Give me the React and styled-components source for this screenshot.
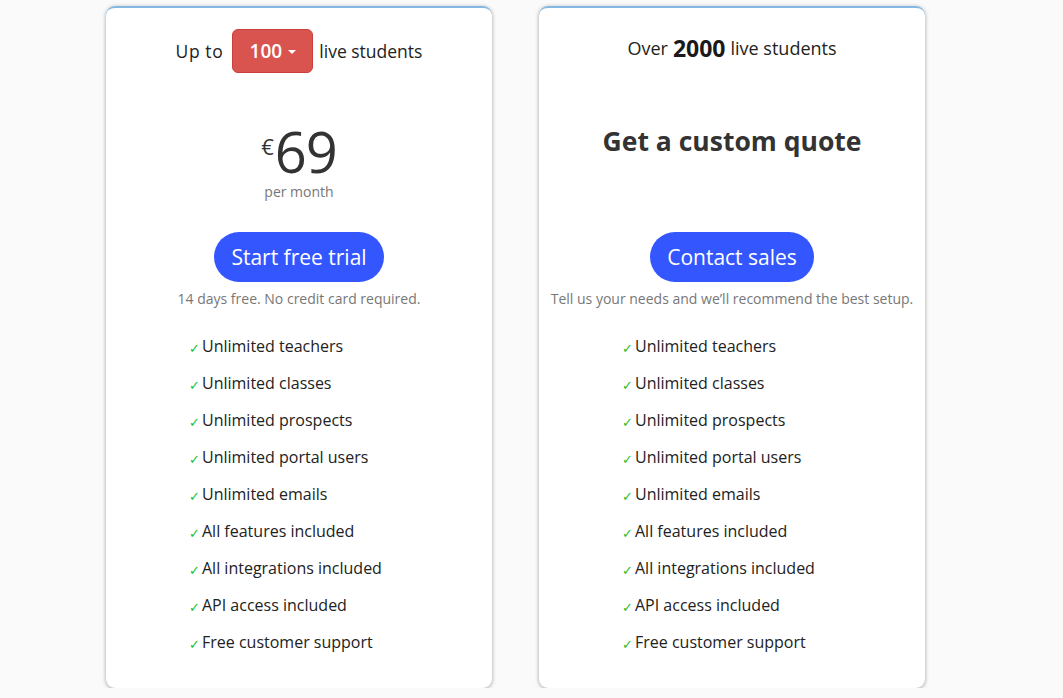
import styled, { createGlobalStyle } from 'styled-components'

const features = [
  'Unlimited teachers',
  'Unlimited classes',
  'Unlimited prospects',
  'Unlimited portal users',
  'Unlimited emails',
  'All features included',
  'All integrations included',
  'API access included',
  'Free customer support',
]

function FeatureList() {
  return (
    <Features>
      {features.map((f) => (
        <Feature key={f}>
          <Check>✓</Check>
          {f}
        </Feature>
      ))}
    </Features>
  )
}

function App() {
  return (
    <>
      <GlobalStyle />
      <Page>
        <Card>
          <Header>
            <Lead>Up to</Lead>
            <Dropdown>
              100 <Caret />
            </Dropdown>
            live students
          </Header>
          <Price>
            <Currency>€</Currency>69
          </Price>
          <Period>per month</Period>
          <CtaButton>Start free trial</CtaButton>
          <Note>14 days free. No credit card required.</Note>
          <FeatureList />
        </Card>

        <Card>
          <Header $tight>
            Over <Big>2000</Big> live students
          </Header>
          <Quote>Get a custom quote</Quote>
          <CtaButton>Contact sales</CtaButton>
          <Note>Tell us your needs and we’ll recommend the best setup.</Note>
          <FeatureList />
        </Card>
      </Page>
    </>
  )
}

const GlobalStyle = createGlobalStyle`
  html, body {
    margin: 0;
    padding: 0;
    background: #fafafa;
    font-family: "Open Sans", "Noto Sans", sans-serif;
    color: #333;
  }
`

const Page = styled.div`
  display: flex;
  gap: 47px;
  padding: 6px 0 0 106px;
`

const Card = styled.div`
  width: 386px;
  height: 682px;
  box-sizing: border-box;
  background: #fff;
  border-radius: 9px;
  border-top: 2px solid #84b8e2;
  box-shadow: 0 1px 4px rgba(0, 0, 0, 0.35);
  display: flex;
  flex-direction: column;
  align-items: center;
  padding-top: 21px;
`

const Header = styled.div`
  height: 44px;
  display: flex;
  align-items: center;
  gap: ${(p) => (p.$tight ? '5px' : '6px')};
  font-size: ${(p) => (p.$tight ? '18px' : '17.5px')};
  color: #222;
  margin-top: ${(p) => (p.$tight ? '-3px' : '0')};
  margin-bottom: ${(p) => (p.$tight ? '3px' : '0')};
`

const Lead = styled.span`
  letter-spacing: 0.6px;
`

const Big = styled.b`
  font-size: 23px;
  font-weight: 700;
  color: #1a1a1a;
`

const Dropdown = styled.button`
  width: 81px;
  height: 44px;
  border: 1px solid #c9403c;
  border-radius: 6px;
  background: #d9534f;
  color: #fff;
  font-family: inherit;
  font-size: 19px;
  font-weight: 600;
  display: flex;
  align-items: center;
  justify-content: center;
  gap: 6px;
  padding: 0;
  margin: 0 0 0 3px;
`

const Caret = styled.span`
  width: 0;
  height: 0;
  border-left: 4px solid transparent;
  border-right: 4px solid transparent;
  border-top: 4px solid #fff;
  margin-top: 2px;
`

const Price = styled.div`
  margin-top: 50px;
  font-size: 56px;
  line-height: 56px;
  font-weight: 500;
  color: #333;
  display: flex;
  align-items: flex-start;
  letter-spacing: -1px;
`

const Currency = styled.span`
  font-size: 22px;
  line-height: 22px;
  margin-top: 12px;
  margin-right: 1px;
  letter-spacing: 0;
`

const Period = styled.div`
  font-size: 14px;
  line-height: 19px;
  color: #777;
  margin-top: 3px;
  margin-bottom: 31px;
`

const Quote = styled.h2`
  margin: 51px 0 74px;
  font-size: 26.5px;
  line-height: 34px;
  font-weight: 700;
  color: #333;
`

const CtaButton = styled.button`
  height: 50px;
  padding: 0 17px;
  border: none;
  border-radius: 25px;
  background: #3456ff;
  color: #fff;
  font-family: inherit;
  font-size: 21px;
  font-weight: 500;
`

const Note = styled.div`
  margin-top: 7px;
  font-size: 14px;
  color: #777;
`

const Features = styled.ul`
  align-self: stretch;
  list-style: none;
  margin: 19px 0 0;
  padding: 0 0 0 83px;
`

const Feature = styled.li`
  height: 37px;
  display: flex;
  align-items: center;
  font-size: 16px;
  color: #222;
`

const Check = styled.span`
  color: #22c02a;
  font-size: 13px;
  width: 13px;
  margin-top: 4px;
`

export default App
